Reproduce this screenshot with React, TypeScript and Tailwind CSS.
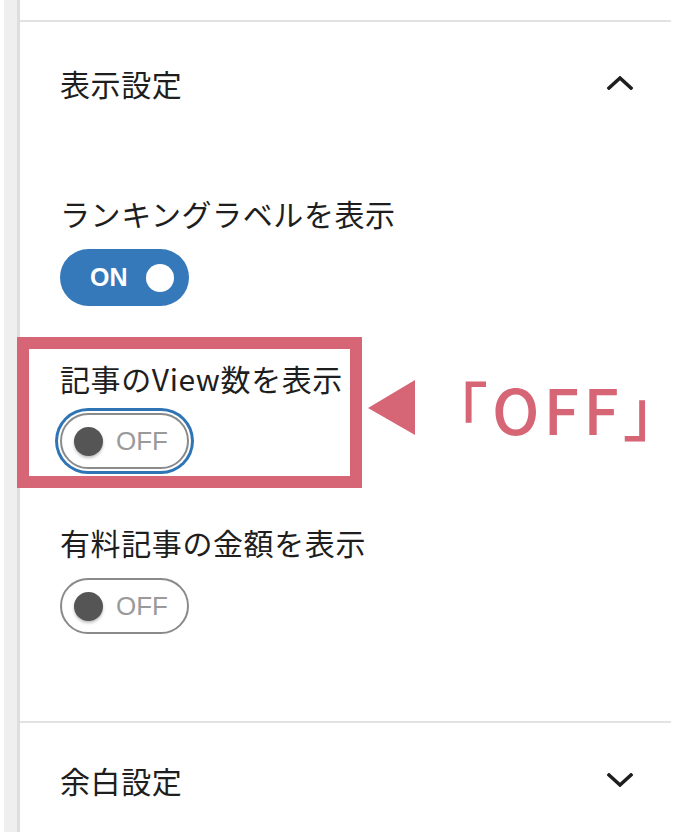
import React from "react";

const jp = { fontFamily: '"Noto Sans CJK JP", "Noto Sans", sans-serif' };

function Chevron({ up }: { up?: boolean }) {
  return (
    <svg width="26" height="14" viewBox="0 0 26 14" fill="none">
      <polyline
        points={up ? "2,12 13,2 24,12" : "2,2 13,12 24,2"}
        stroke="#1e1e1e"
        strokeWidth="3.5"
        strokeLinecap="square"
      />
    </svg>
  );
}

function Toggle({ on, focused }: { on?: boolean; focused?: boolean }) {
  if (on) {
    return (
      <div className="flex h-[57px] w-[129px] items-center justify-between rounded-full bg-[#3579ba] pl-[30px] pr-[15px]">
        <span className="text-[25px] font-bold leading-none text-white" style={{ fontFamily: '"Liberation Sans", sans-serif' }}>
          ON
        </span>
        <span className="h-[28px] w-[28px] rounded-full bg-white" />
      </div>
    );
  }
  return (
    <div
      className={
        focused
          ? "flex h-[56px] w-[129px] items-center rounded-full border-2 border-[#8a8a8a] bg-white pl-[12px] ring-[3px] ring-[#2f75b5] ring-offset-2"
          : "flex h-[56px] w-[129px] items-center rounded-full border-2 border-[#8a8a8a] bg-white pl-[12px]"
      }
    >
      <span className="h-[29px] w-[29px] rounded-full bg-[#555] shadow-[0_2px_3px_rgba(0,0,0,0.25)]" />
      <span className="ml-[13px] text-[26px] leading-none text-[#9a9a9a]" style={{ fontFamily: '"Liberation Sans", sans-serif' }}>
        OFF
      </span>
    </div>
  );
}

export default function App() {
  return (
    <div className="flex min-h-[832px] w-[692px] bg-white text-[#1e1e1e]" style={jp}>
      {/* 左のサイドバー */}
      <div className="ml-[4px] w-[13px] bg-[#efefef]" />
      <div className="w-[3px] bg-[#dedede]" />

      <div className="w-[651px]">
        <div className="box-content h-[20px] border-b-2 border-[#e2e2e2]" />

        {/* 表示設定 */}
        <div className="flex h-[122px] items-center justify-between pl-[40px] pr-[38px]">
          <span className="text-[30px] leading-[40px] tracking-[0.6px]">表示設定</span>
          <Chevron up />
        </div>

        <div className="px-[40px] pt-[49px] pb-[87px]">
          <div className="text-[30px] leading-[40px] tracking-[0.6px]">ランキングラベルを表示</div>
          <div className="mt-[16px]">
            <Toggle on />
          </div>

          <div className="relative mt-[52px]">
            <div className="text-[30px] leading-[40px] tracking-[0.6px]">記事のView数を表示</div>
            <div className="mt-[15px]">
              <Toggle focused />
            </div>

            {/* 注釈 */}
            <div className="absolute left-[-43px] top-[-21px] h-[151px] w-[345px] border-[12px] border-[#d66676]" />
            <div className="absolute left-[308px] top-[18px] flex items-center">
              <svg width="47" height="55" viewBox="0 0 47 55">
                <polygon points="0,28 47,0 47,55" fill="#d66676" />
              </svg>
              <span className="ml-[10px] text-[63px] font-medium leading-none tracking-[4px] text-[#d66676]">「OFF」</span>
            </div>
          </div>

          <div className="mt-[53px] text-[30px] leading-[40px] tracking-[0.6px]">有料記事の金額を表示</div>
          <div className="mt-[16px]">
            <Toggle />
          </div>
        </div>

        <div className="border-t-2 border-[#e2e2e2]" />

        {/* 余白設定 */}
        <div className="flex h-[114px] items-center justify-between pl-[40px] pr-[38px]">
          <span className="text-[30px] leading-[40px] tracking-[0.6px]">余白設定</span>
          <Chevron />
        </div>
      </div>
    </div>
  );
}
